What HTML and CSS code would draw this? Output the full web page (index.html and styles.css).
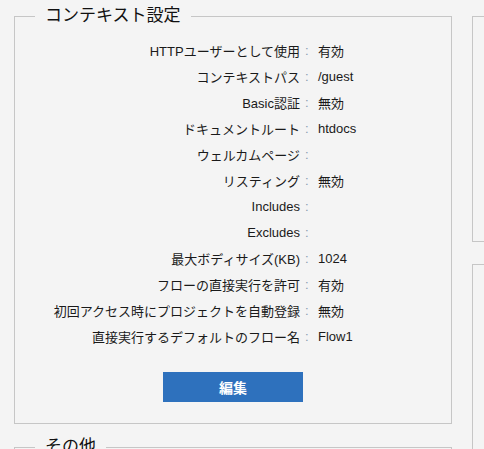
FILE: index.html
```html
<!DOCTYPE html>
<html lang="ja">
<head>
<meta charset="utf-8">
<link rel="stylesheet" href="styles.css">
</head>
<body>
<div class="page">
  <div class="main">
    <fieldset class="panel">
      <legend>コンテキスト設定</legend>
      <div class="props">
        <div class="k">HTTPユーザーとして使用</div><div class="c">:</div><div class="v">有効</div>
        <div class="k">コンテキストパス</div><div class="c">:</div><div class="v">/guest</div>
        <div class="k">Basic認証</div><div class="c">:</div><div class="v">無効</div>
        <div class="k">ドキュメントルート</div><div class="c">:</div><div class="v">htdocs</div>
        <div class="k">ウェルカムページ</div><div class="c">:</div><div class="v"></div>
        <div class="k">リスティング</div><div class="c">:</div><div class="v">無効</div>
        <div class="k">Includes</div><div class="c">:</div><div class="v"></div>
        <div class="k">Excludes</div><div class="c">:</div><div class="v"></div>
        <div class="k">最大ボディサイズ(KB)</div><div class="c">:</div><div class="v">1024</div>
        <div class="k">フローの直接実行を許可</div><div class="c">:</div><div class="v">有効</div>
        <div class="k">初回アクセス時にプロジェクトを自動登録</div><div class="c">:</div><div class="v">無効</div>
        <div class="k">直接実行するデフォルトのフロー名</div><div class="c">:</div><div class="v">Flow1</div>
      </div>
      <div class="actions"><button class="btn">編集</button></div>
    </fieldset>
    <fieldset class="panel other">
      <legend>その他</legend>
      <div class="spacer"></div>
    </fieldset>
  </div>
  <div class="side">
    <div class="box box1"></div>
    <div class="box box2"></div>
  </div>
</div>
</body>
</html>
```
FILE: styles.css
```css
html, body {
  margin: 0;
  padding: 0;
  background: #f4f4f4;
  overflow: hidden;
}
body {
  font-family: "Liberation Sans", "Noto Sans CJK JP", sans-serif;
  font-size: 13px;
  color: #1a1a1a;
}
.page {
  display: flex;
  gap: 20px;
  padding: 6px 0 0 14px;
  height: 443px;
}
.main {
  width: 438px;
  flex: none;
}
.panel {
  margin: 0;
  padding: 11px 0 21px 0;
  border: 1px solid #c6c6c6;
  min-width: 0;
}
.panel legend {
  margin-left: 20px;
  padding: 0 10px;
  font-size: 17px;
  line-height: 20px;
  height: 20px;
  color: #111;
}
.props {
  display: grid;
  grid-template-columns: 285px 18px 1fr;
  grid-auto-rows: 26px;
  align-items: center;
}
.k {
  text-align: right;
  white-space: nowrap;
}
.c {
  color: #8a9bb0;
  padding-left: 5px;
}
.actions {
  display: flex;
  justify-content: center;
  margin-top: 23px;
}
.btn {
  width: 140px;
  height: 30px;
  border: none;
  background: #2e71bd;
  color: #fff;
  font-family: "Liberation Sans", "Noto Sans CJK JP", sans-serif;
  font-size: 14px;
  font-weight: bold;
  padding: 0;
}
.other {
  margin-top: 13px;
}
.spacer {
  height: 40px;
}
.side {
  flex: 1;
  display: flex;
  flex-direction: column;
  gap: 22px;
  padding-top: 10px;
}
.box {
  flex: none;
  border: 1px solid #c6c6c6;
  border-right: none;
}
.box1 {
  height: 224px;
}
.box2 {
  height: 200px;
}
```
